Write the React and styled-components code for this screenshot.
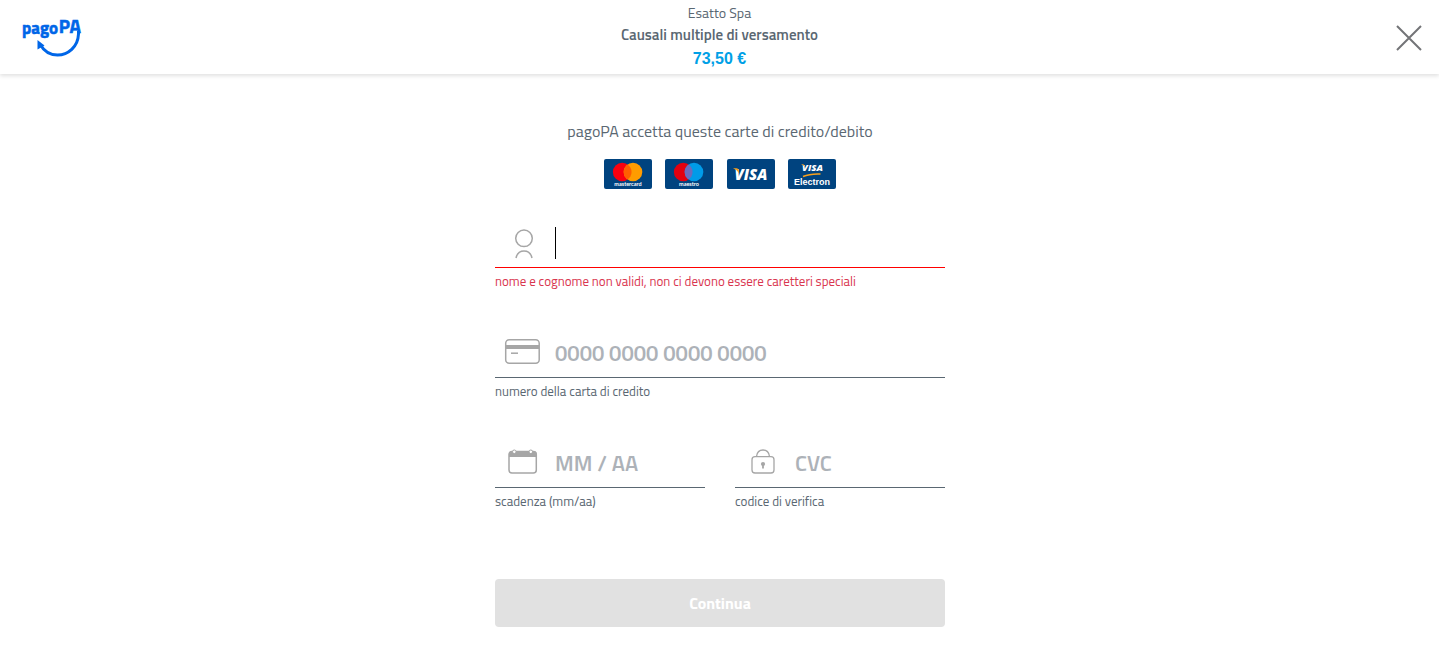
import React, { useState } from 'react';
import styled, { createGlobalStyle } from 'styled-components';

const GlobalStyle = createGlobalStyle`
  *,
  *::before,
  *::after {
    box-sizing: border-box;
  }

  body {
    margin: 0;
    background: #fff;
    color: #5c6f82;
    font-family: 'Titillium Web', Lato, 'Open Sans', sans-serif;
    font-size: 16px;
    line-height: 24px;
  }
`;

const Header = styled.header`
  display: grid;
  grid-template-columns: 1fr auto 1fr;
  align-items: center;
  min-height: 74px;
  padding: 0 16px;
  background: #fff;
  box-shadow: 0 2px 4px rgba(0, 0, 0, 0.12);
`;

const LogoLink = styled.a`
  display: block;
  justify-self: start;
  height: 50px;
  padding-left: 6px;
  text-decoration: none;
`;

const Summary = styled.div`
  display: flex;
  flex-direction: column;
  align-items: center;
  padding-bottom: 1px;
  text-align: center;
  color: #5a6772;
`;

const Merchant = styled.span`
  font-size: 14px;
  line-height: 21px;
`;

const Reason = styled.strong`
  font-size: 15px;
  line-height: 24px;
  font-weight: 600;
`;

const Amount = styled.strong`
  color: #00a0e6;
  font-family: 'Liberation Sans', Arial, sans-serif;
  font-size: 16px;
  line-height: 24px;
`;

const CloseButton = styled.button`
  justify-self: end;
  display: flex;
  padding: 2px 0 0;
  border: 0;
  background: none;
  cursor: pointer;
`;

const Main = styled.main`
  width: 100%;
  max-width: 483px;
  margin: 0 auto;
  padding: 45px 16px 20px 17px;
`;

const Intro = styled.p`
  margin: 0 0 16px;
  color: #5a6772;
  text-align: center;
`;

const CardList = styled.ul`
  display: flex;
  justify-content: space-between;
  width: 232px;
  margin: 0 auto 34px;
  padding: 0;
  list-style: none;
`;

const CardItem = styled.li`
  height: 30px;
`;

const Row = styled.div`
  display: grid;
  grid-template-columns: repeat(${props => props.$columns || 1}, 1fr);
  gap: 30px;
  margin-bottom: 30px;
`;

const Field = styled.div`
  min-width: 0;
  min-height: 80px;
`;

const InputGroup = styled.div`
  position: relative;
  display: flex;
  align-items: center;
  height: 45px;
  padding: 0 0 2px 8px;
  border-bottom: 1px solid ${props => (props.$invalid ? '#f00' : '#5a6772')};
`;

const Caret = styled.span`
  position: absolute;
  left: 60px;
  top: 4px;
  width: 1px;
  height: 32px;
  background: #000;
  pointer-events: none;
`;

const Input = styled.input`
  flex: 1;
  min-width: 0;
  height: 42px;
  padding: 0 0 2px 12px;
  border: 0;
  outline: 0;
  background: transparent;
  color: #5a6772;
  font-family: inherit;
  font-size: 22px;
  font-weight: 600;

  &::placeholder {
    color: #adb2b8;
    opacity: 1;
  }
`;

const Label = styled.label`
  display: block;
  margin-top: 3px;
  color: ${props => (props.$invalid ? '#d9364f' : '#5a6772')};
  font-size: 13px;
  line-height: 20px;
`;

const SubmitButton = styled.button`
  display: block;
  width: 100%;
  height: 48px;
  margin-top: 56px;
  border: 0;
  border-radius: 4px;
  background: #e1e1e1;
  color: #fff;
  font-family: inherit;
  font-size: 16px;
  font-weight: 700;
`;

const PagoPaLogo = () => (
  <svg width="62" height="50" viewBox="0 -4 62 50" role="img" aria-label="pagoPA">
    <g fill="#0066e8" stroke="#0066e8" strokeWidth="0.5" fontFamily="'Titillium Web', Lato, sans-serif" fontWeight="700">
      <text x="0" y="18" fontSize="17">pago</text>
      <text x="59" y="17" textAnchor="end" fontSize="19">PA</text>
    </g>
    <path d="M56.500 15V18C56 31 46 39 35.500 39C28 39 22 35 18.500 29" fill="none" stroke="#0066e8" strokeWidth="3" />
    <path d="M15.500 24L22.500 29.500L15.500 33.500Z" fill="#0066e8" />
  </svg>
);

const CloseIcon = () => (
  <svg width="28" height="28" viewBox="0 0 28 28" fill="none" stroke="#737477" strokeWidth="2" aria-hidden="true">
    <path d="M2 2L26 26M26 2L2 26" />
  </svg>
);

const FieldIcon = ({ children }) => (
  <svg width="40" height="32" viewBox="0 0 40 32" fill="none" stroke="#a6a6a6" strokeWidth="1.5" aria-hidden="true">
    {children}
  </svg>
);

const UserIcon = () => (
  <FieldIcon>
    <circle cx="21" cy="10.300" r="8.300" />
    <path d="M13 30C14 25.500 17 23 21 23S28 25.500 29 30" />
  </FieldIcon>
);

const CardIcon = () => (
  <FieldIcon>
    <rect x="2.700" y="1.700" width="33.500" height="23.500" rx="3.500" />
    <path d="M3 9H36" strokeWidth="4" />
    <path d="M8 15.200H15" />
  </FieldIcon>
);

const CalendarIcon = () => (
  <FieldIcon>
    <path d="M6 9V6Q6 3 9 3H30.500Q33.500 3 33.500 6V9Z" fill="#a6a6a6" stroke="none" />
    <rect x="6" y="3.500" width="27.300" height="21.500" rx="3" />
    <circle cx="11.300" cy="3.800" r="1.800" fill="#fff" strokeWidth="1" />
    <circle cx="27.800" cy="3.800" r="1.800" fill="#fff" strokeWidth="1" />
  </FieldIcon>
);

const LockIcon = () => (
  <FieldIcon>
    <rect x="9" y="8.700" width="22" height="16.300" rx="3" strokeWidth="1.300" />
    <path d="M13.500 8.500C14 4.500 16.500 2 20 2S26 4.500 26.500 8.500" strokeWidth="1.300" />
    <circle cx="20" cy="16" r="2.100" fill="#a6a6a6" stroke="none" />
    <path d="M20 16V20.500" strokeWidth="1.800" />
  </FieldIcon>
);

const CardBadge = ({ name, children }) => (
  <svg width="48" height="30" viewBox="0 0 48 30" role="img" aria-label={name}>
    <rect width="48" height="30" rx="2" fill="#00437f" />
    {children}
  </svg>
);

const CirclesBadge = ({ name, left, right, middle }) => (
  <CardBadge name={name}>
    <circle cx="18.200" cy="13" r="9.300" fill={left} />
    <circle cx="29" cy="13" r="9.300" fill={right} />
    <path d="M23.600 5.400A9.300 9.300 0 0 1 23.600 20.600A9.300 9.300 0 0 1 23.600 5.400Z" fill={middle} />
    <text x="24" y="27" fill="#fff" textAnchor="middle" fontFamily="Lato, sans-serif" fontSize="5.500" fontWeight="700">
      {name}
    </text>
  </CardBadge>
);

const VisaBadge = () => (
  <CardBadge name="visa">
    <text x="24" y="20.500" fill="#fff" textAnchor="middle" fontFamily="'Open Sans', sans-serif" fontSize="15" fontWeight="800" fontStyle="italic">
      VISA
    </text>
    <path d="M6 9.300H9.500Q11.300 9.300 11.700 11L12.300 14.500Q10 10.500 6 9.300Z" fill="#f9a11b" />
  </CardBadge>
);

const ElectronBadge = () => (
  <CardBadge name="visa electron">
    <text x="24.500" y="12.300" fill="#fff" textAnchor="middle" fontFamily="'Open Sans', sans-serif" fontSize="9.500" fontWeight="800" fontStyle="italic">
      VISA
    </text>
    <path d="M13 5.200H15.500L17 8.500Q15.500 6 13 5.200Z" fill="#f9a11b" />
    <path d="M15 17.500Q22 14.500 32.500 15" fill="none" stroke="#f9a11b" strokeWidth="1.400" />
    <text x="24" y="26" fill="#fff" textAnchor="middle" fontFamily="'Liberation Sans', sans-serif" fontSize="9" fontWeight="700">
      Electron
    </text>
  </CardBadge>
);

const TextField = ({ id, icon, label, placeholder, invalid, caret }) => {
  const [value, setValue] = useState('');

  return (
    <Field>
      <InputGroup $invalid={invalid}>
        {icon}
        <Input
          id={id}
          value={value}
          placeholder={placeholder}
          aria-invalid={invalid}
          autoComplete="off"
          onChange={e => setValue(e.target.value)}
        />
        {caret && !value && <Caret />}
      </InputGroup>
      <Label htmlFor={id} $invalid={invalid}>{label}</Label>
    </Field>
  );
};

const App = () => (
  <>
    <GlobalStyle />
    <Header>
      <LogoLink href="#">
        <PagoPaLogo />
      </LogoLink>
      <Summary>
        <Merchant>Esatto Spa</Merchant>
        <Reason>Causali multiple di versamento</Reason>
        <Amount>73,50 €</Amount>
      </Summary>
      <CloseButton type="button" aria-label="Chiudi">
        <CloseIcon />
      </CloseButton>
    </Header>
    <Main>
      <Intro>pagoPA accetta queste carte di credito/debito</Intro>
      <CardList>
        <CardItem>
          <CirclesBadge name="mastercard" left="#f9000f" right="#ff9c00" middle="#ff5f00" />
        </CardItem>
        <CardItem>
          <CirclesBadge name="maestro" left="#e3000f" right="#009be8" middle="#6c6bbd" />
        </CardItem>
        <CardItem>
          <VisaBadge />
        </CardItem>
        <CardItem>
          <ElectronBadge />
        </CardItem>
      </CardList>
      <form onSubmit={e => e.preventDefault()}>
        <Row>
          <TextField
            id="name"
            icon={<UserIcon />}
            label="nome e cognome non validi, non ci devono essere caretteri speciali"
            invalid
            caret
          />
        </Row>
        <Row>
          <TextField
            id="number"
            icon={<CardIcon />}
            label="numero della carta di credito"
            placeholder="0000 0000 0000 0000"
          />
        </Row>
        <Row $columns={2}>
          <TextField id="expiry" icon={<CalendarIcon />} label="scadenza (mm/aa)" placeholder="MM / AA" />
          <TextField id="cvc" icon={<LockIcon />} label="codice di verifica" placeholder="CVC" />
        </Row>
        <SubmitButton type="submit" disabled>Continua</SubmitButton>
      </form>
    </Main>
  </>
);

export default App;
